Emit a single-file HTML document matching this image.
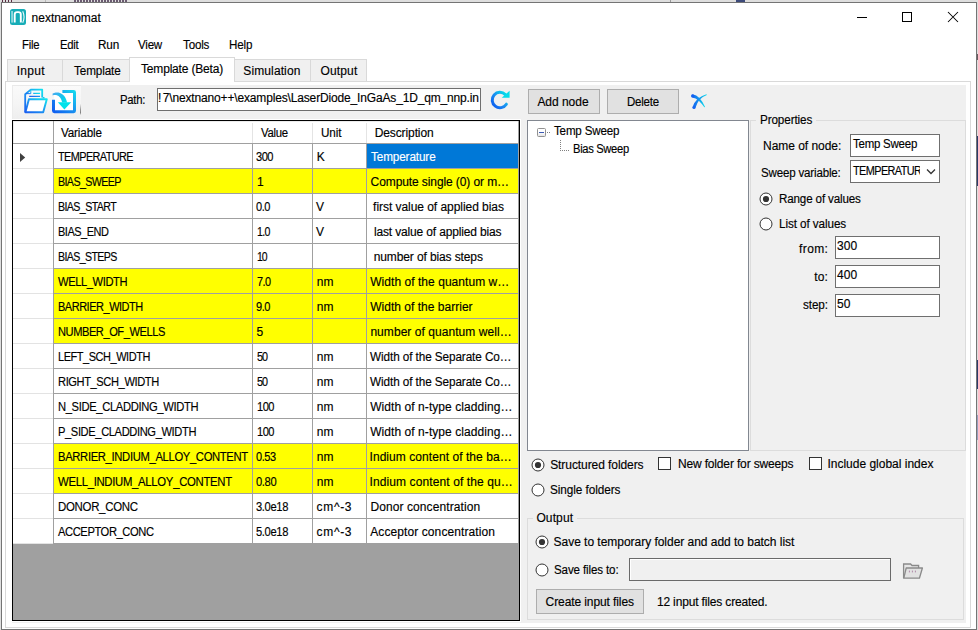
<!DOCTYPE html>
<html><head><meta charset="utf-8"><title>nextnanomat</title>
<style>
html,body{margin:0;padding:0;width:978px;height:630px;overflow:hidden;background:#dedede}
body>div,body>svg{position:absolute}
.t{position:absolute;transform-origin:0 0;-webkit-text-stroke-width:0.15px;font-family:"Liberation Sans", sans-serif;font-size:12px;line-height:15px;white-space:pre;color:#000}
</style></head><body>
<div style="left:0px;top:0px;width:978px;height:630px;background:#dedede"></div>
<div style="left:1px;top:2px;width:976px;height:628px;background:#fff;box-sizing:border-box;border:1px solid #747474"></div>
<div style="left:2px;top:0px;width:1px;height:2px;background:#5a2a40"></div>
<div style="left:5px;top:0px;width:1px;height:2px;background:#5a2a40"></div>
<div style="left:8px;top:0px;width:1px;height:2px;background:#5a2a40"></div>
<div style="left:11px;top:0px;width:1px;height:2px;background:#5a2a40"></div>
<div style="left:45px;top:0px;width:1px;height:2px;background:#b8b8b8"></div>
<div style="left:74px;top:0px;width:2px;height:2px;background:#6a5a70"></div>
<div style="left:77px;top:0px;width:2px;height:2px;background:#6a5a70"></div>
<div style="left:80px;top:0px;width:2px;height:2px;background:#6a5a70"></div>
<div style="left:83px;top:0px;width:2px;height:2px;background:#6a5a70"></div>
<div style="left:86px;top:0px;width:2px;height:2px;background:#6a5a70"></div>
<div style="left:89px;top:0px;width:2px;height:2px;background:#6a5a70"></div>
<div style="left:92px;top:0px;width:2px;height:2px;background:#6a5a70"></div>
<div style="left:95px;top:0px;width:2px;height:2px;background:#6a5a70"></div>
<div style="left:98px;top:0px;width:2px;height:2px;background:#6a5a70"></div>
<div style="left:101px;top:0px;width:2px;height:2px;background:#6a5a70"></div>
<div style="left:104px;top:0px;width:2px;height:2px;background:#6a5a70"></div>
<div style="left:107px;top:0px;width:2px;height:2px;background:#6a5a70"></div>
<div style="left:110px;top:0px;width:2px;height:2px;background:#6a5a70"></div>
<div style="left:113px;top:0px;width:2px;height:2px;background:#6a5a70"></div>
<div style="left:116px;top:0px;width:2px;height:2px;background:#6a5a70"></div>
<div style="left:119px;top:0px;width:2px;height:2px;background:#6a5a70"></div>
<div style="left:122px;top:0px;width:2px;height:2px;background:#6a5a70"></div>
<div style="left:125px;top:0px;width:2px;height:2px;background:#6a5a70"></div>
<div style="left:670px;top:0px;width:1px;height:2px;background:#9a9a9a"></div>
<div style="left:736px;top:0px;width:9px;height:2px;background:#3c4a7a"></div>
<div style="left:977px;top:136px;width:1px;height:50px;background:#2c3a6a"></div>
<div style="left:977px;top:360px;width:1px;height:29px;background:#2c3a6a"></div>
<div style="left:977px;top:415px;width:1px;height:25px;background:#9aa0c0"></div>
<div style="left:977px;top:54px;width:1px;height:6px;background:#6a5a60"></div>
<svg style="left:10px;top:9px" width="16" height="16" viewBox="0 0 16 16">
<rect x="0" y="0" width="16" height="16" rx="2.5" fill="#17adb7"/>
<rect x="1.3" y="2" width="1.5" height="11.6" fill="#aee3e7"/>
<path d="M4.7 13.4 V5.4 Q4.7 3.1 7.2 3.1 H8.4 Q10.8 3.1 10.8 5.4 V13.4" fill="none" stroke="#fff" stroke-width="1.9"/>
<path d="M12.7 2.2 Q15.4 8 12.7 13.8" fill="none" stroke="#f0fbfc" stroke-width="1.1"/>
</svg>
<div style="left:857px;top:17px;width:10px;height:1px;background:#000"></div>
<div style="left:902px;top:12px;width:10px;height:10px;box-sizing:border-box;border:1px solid #000"></div>
<svg style="left:947px;top:11px" width="12" height="12" viewBox="0 0 12 12">
<path d="M1 1 L11 11 M11 1 L1 11" stroke="#000" stroke-width="1.05"/></svg>
<div style="left:5px;top:81px;width:966px;height:547px;background:#fff;box-sizing:border-box;border:1px solid #d9d9d9"></div>
<div style="left:7px;top:59px;width:56px;height:23px;background:#f0f0f0;box-sizing:border-box;border:1px solid #d9d9d9"></div>
<div style="left:62px;top:59px;width:68px;height:23px;background:#f0f0f0;box-sizing:border-box;border:1px solid #d9d9d9"></div>
<div style="left:234px;top:59px;width:77px;height:23px;background:#f0f0f0;box-sizing:border-box;border:1px solid #d9d9d9"></div>
<div style="left:310px;top:59px;width:57px;height:23px;background:#f0f0f0;box-sizing:border-box;border:1px solid #d9d9d9"></div>
<div style="left:129px;top:57px;width:106px;height:25px;background:#fff;box-sizing:border-box;border:1px solid #d9d9d9;border-bottom:none"></div>
<div style="left:130px;top:81px;width:104px;height:4px;background:#fff"></div>
<div style="left:12px;top:85px;width:954px;height:538px;background:#f0f0f0"></div>
<div style="left:12px;top:85px;width:69px;height:34px;background:linear-gradient(#fafafa,#f4f4f4 60%,#eeeeee);box-sizing:border-box;border-top:1px solid #e9e9e9;border-left:1px solid #ececec"></div>
<div style="left:80px;top:104px;width:1px;height:11px;background:linear-gradient(#f0f0f0,#9a9a9a 50%,#808080 80%,#f0f0f0)"></div>
<svg style="left:22px;top:87px" width="28" height="28" viewBox="0 0 28 28">
<defs><linearGradient id="gf" x1="0" y1="1" x2="1" y2="0"><stop offset="0" stop-color="#1a5ff0"/><stop offset="0.55" stop-color="#1c9ef2"/><stop offset="1" stop-color="#10e6ee"/></linearGradient></defs>
<path d="M3.2 25.2 V7.2 L8.8 2.6 H20.2 V10.4 M21.6 11.6 V10" fill="none" stroke="url(#gf)" stroke-width="1.8" stroke-linejoin="round"/>
<path d="M8.8 2.6 V6.6 H4" fill="none" stroke="url(#gf)" stroke-width="1"/>
<path d="M11.2 6.4 H18 M7.2 9.4 H18" stroke="url(#gf)" stroke-width="1.2"/>
<path d="M6.9 12.2 H24.8 L21.2 25.3 H3.4 Z" fill="#fff" stroke="url(#gf)" stroke-width="1.9" stroke-linejoin="round"/>
</svg>
<svg style="left:50px;top:87px" width="28" height="28" viewBox="0 0 28 28">
<defs><linearGradient id="gi" x1="0" y1="1" x2="1" y2="0"><stop offset="0" stop-color="#0f5ff0"/><stop offset="0.5" stop-color="#1890f0"/><stop offset="1" stop-color="#14d8ee"/></linearGradient>
<linearGradient id="ga" x1="0" y1="0" x2="1" y2="1"><stop offset="0" stop-color="#4aa8f0"/><stop offset="0.6" stop-color="#10c8ec"/><stop offset="1" stop-color="#00e4ea"/></linearGradient></defs>
<rect x="4" y="5" width="20" height="19" fill="#fff"/>
<path d="M12.4 4.4 H23.6 Q24.5 4.4 24.5 5.3 V23.8 Q24.5 24.7 23.6 24.7 H4.4 Q3.5 24.7 3.5 23.8 V12.8" fill="none" stroke="url(#gi)" stroke-width="3"/>
<path d="M2.6 6.6 C6 4.4 14.8 4.2 17.1 15.6 L12.1 15.6 C11.2 9.8 7.2 7.1 2.6 8.4 Z" fill="url(#ga)"/>
<path d="M7.8 15.3 H21.2 L14.4 22.5 Z" fill="#00e2ea"/>
</svg>
<div style="left:157px;top:88px;width:324px;height:23px;box-sizing:border-box;border:1px solid #6f6f6f;background:#fff;overflow:hidden"></div>
<div style="left:158px;top:89px;width:322px;height:21px;overflow:hidden"></div>
<svg style="left:488px;top:88px" width="24" height="24" viewBox="0 0 24 24">
<defs><linearGradient id="gr" x1="0" y1="1" x2="1" y2="0"><stop offset="0" stop-color="#0b55f0"/><stop offset="0.5" stop-color="#1b8ff0"/><stop offset="1" stop-color="#00e6ea"/></linearGradient></defs>
<path d="M17.4 6.6 A7.7 7.7 0 1 0 18.4 16.2" fill="none" stroke="url(#gr)" stroke-width="3" stroke-linecap="round"/>
<path d="M13.7 9.8 H21.6 V2.7 Z" fill="#05dcea"/>
</svg>
<div style="left:528px;top:89px;width:72px;height:25px;background:#e1e1e1;box-sizing:border-box;border:1px solid #adadad"></div>
<div style="left:607px;top:89px;width:72px;height:25px;background:#e1e1e1;box-sizing:border-box;border:1px solid #adadad"></div>
<svg style="left:688px;top:91px" width="22" height="20" viewBox="0 0 22 20">
<defs><linearGradient id="gx" x1="0" y1="0" x2="1" y2="0"><stop offset="0" stop-color="#1460f0"/><stop offset="0.5" stop-color="#1298ee"/><stop offset="1" stop-color="#0ee0ec"/></linearGradient></defs>
<path d="M4.4 3.3 Q8.6 4 11.4 7.1 Q14.6 10.6 17.1 15.9 L16.3 16.3 Q13.4 12 10.6 9.4 Q7.8 7.1 4.2 6.5 Z" fill="url(#gx)"/>
<circle cx="4.6" cy="4.9" r="1.6" fill="#1460f0"/>
<path d="M18.9 4.1 Q13.6 6.2 11.3 9 Q8.9 12 7.6 16.6 L4.4 16.4 Q6 11.4 9.8 7.8 Q12.8 5 18.4 3.2 Z" fill="url(#gx)"/>
<circle cx="6" cy="16.5" r="1.6" fill="#1766f0"/>
</svg>
<div style="left:12px;top:119px;width:509px;height:1px;background:#fff"></div>
<div style="left:520px;top:119px;width:1px;height:503px;background:#fff"></div>
<div style="left:12px;top:621px;width:509px;height:1px;background:#fff"></div>
<div style="left:12px;top:120px;width:508px;height:501px;background:#a0a0a0;box-sizing:border-box;border:1px solid #000"></div>
<div style="left:13px;top:121px;width:505px;height:22px;background:#fff"></div>
<div style="left:13px;top:121px;width:505px;height:1px;background:#ececec"></div>
<div style="left:13px;top:121px;width:1px;height:22px;background:#ececec"></div>
<div style="left:13px;top:143px;width:505px;height:1px;background:#a0a0a0"></div>
<div style="left:53px;top:121px;width:1px;height:22px;background:#a0a0a0"></div>
<div style="left:252px;top:123px;width:1px;height:20px;background:#e4e4e4"></div>
<div style="left:312px;top:123px;width:1px;height:20px;background:#e4e4e4"></div>
<div style="left:366px;top:123px;width:1px;height:20px;background:#e4e4e4"></div>
<div style="left:13px;top:144px;width:40px;height:24px;background:#fff"></div>
<div style="left:13px;top:168px;width:40px;height:1px;background:#e3e3e3"></div>
<div style="left:54px;top:144px;width:464px;height:24px;background:#fff"></div>
<div style="left:367px;top:144px;width:151px;height:24px;background:#0078d7"></div>
<div style="left:53px;top:168px;width:466px;height:1px;background:#a0a0a0"></div>
<div style="left:53px;top:144px;width:1px;height:25px;background:#a0a0a0"></div>
<div style="left:252px;top:144px;width:1px;height:25px;background:#a0a0a0"></div>
<div style="left:312px;top:144px;width:1px;height:25px;background:#a0a0a0"></div>
<div style="left:366px;top:144px;width:1px;height:25px;background:#a0a0a0"></div>
<div style="left:518px;top:144px;width:1px;height:25px;background:#a0a0a0"></div>
<div style="left:13px;top:169px;width:40px;height:24px;background:#fff"></div>
<div style="left:13px;top:193px;width:40px;height:1px;background:#e3e3e3"></div>
<div style="left:54px;top:169px;width:464px;height:24px;background:#ffff00"></div>
<div style="left:53px;top:193px;width:466px;height:1px;background:#a0a0a0"></div>
<div style="left:53px;top:169px;width:1px;height:25px;background:#a0a0a0"></div>
<div style="left:252px;top:169px;width:1px;height:25px;background:#a0a0a0"></div>
<div style="left:312px;top:169px;width:1px;height:25px;background:#a0a0a0"></div>
<div style="left:366px;top:169px;width:1px;height:25px;background:#a0a0a0"></div>
<div style="left:518px;top:169px;width:1px;height:25px;background:#a0a0a0"></div>
<div style="left:13px;top:194px;width:40px;height:24px;background:#fff"></div>
<div style="left:13px;top:218px;width:40px;height:1px;background:#e3e3e3"></div>
<div style="left:54px;top:194px;width:464px;height:24px;background:#fff"></div>
<div style="left:53px;top:218px;width:466px;height:1px;background:#a0a0a0"></div>
<div style="left:53px;top:194px;width:1px;height:25px;background:#a0a0a0"></div>
<div style="left:252px;top:194px;width:1px;height:25px;background:#a0a0a0"></div>
<div style="left:312px;top:194px;width:1px;height:25px;background:#a0a0a0"></div>
<div style="left:366px;top:194px;width:1px;height:25px;background:#a0a0a0"></div>
<div style="left:518px;top:194px;width:1px;height:25px;background:#a0a0a0"></div>
<div style="left:13px;top:219px;width:40px;height:24px;background:#fff"></div>
<div style="left:13px;top:243px;width:40px;height:1px;background:#e3e3e3"></div>
<div style="left:54px;top:219px;width:464px;height:24px;background:#fff"></div>
<div style="left:53px;top:243px;width:466px;height:1px;background:#a0a0a0"></div>
<div style="left:53px;top:219px;width:1px;height:25px;background:#a0a0a0"></div>
<div style="left:252px;top:219px;width:1px;height:25px;background:#a0a0a0"></div>
<div style="left:312px;top:219px;width:1px;height:25px;background:#a0a0a0"></div>
<div style="left:366px;top:219px;width:1px;height:25px;background:#a0a0a0"></div>
<div style="left:518px;top:219px;width:1px;height:25px;background:#a0a0a0"></div>
<div style="left:13px;top:244px;width:40px;height:24px;background:#fff"></div>
<div style="left:13px;top:268px;width:40px;height:1px;background:#e3e3e3"></div>
<div style="left:54px;top:244px;width:464px;height:24px;background:#fff"></div>
<div style="left:53px;top:268px;width:466px;height:1px;background:#a0a0a0"></div>
<div style="left:53px;top:244px;width:1px;height:25px;background:#a0a0a0"></div>
<div style="left:252px;top:244px;width:1px;height:25px;background:#a0a0a0"></div>
<div style="left:312px;top:244px;width:1px;height:25px;background:#a0a0a0"></div>
<div style="left:366px;top:244px;width:1px;height:25px;background:#a0a0a0"></div>
<div style="left:518px;top:244px;width:1px;height:25px;background:#a0a0a0"></div>
<div style="left:13px;top:269px;width:40px;height:24px;background:#fff"></div>
<div style="left:13px;top:293px;width:40px;height:1px;background:#e3e3e3"></div>
<div style="left:54px;top:269px;width:464px;height:24px;background:#ffff00"></div>
<div style="left:53px;top:293px;width:466px;height:1px;background:#a0a0a0"></div>
<div style="left:53px;top:269px;width:1px;height:25px;background:#a0a0a0"></div>
<div style="left:252px;top:269px;width:1px;height:25px;background:#a0a0a0"></div>
<div style="left:312px;top:269px;width:1px;height:25px;background:#a0a0a0"></div>
<div style="left:366px;top:269px;width:1px;height:25px;background:#a0a0a0"></div>
<div style="left:518px;top:269px;width:1px;height:25px;background:#a0a0a0"></div>
<div style="left:13px;top:294px;width:40px;height:24px;background:#fff"></div>
<div style="left:13px;top:318px;width:40px;height:1px;background:#e3e3e3"></div>
<div style="left:54px;top:294px;width:464px;height:24px;background:#ffff00"></div>
<div style="left:53px;top:318px;width:466px;height:1px;background:#a0a0a0"></div>
<div style="left:53px;top:294px;width:1px;height:25px;background:#a0a0a0"></div>
<div style="left:252px;top:294px;width:1px;height:25px;background:#a0a0a0"></div>
<div style="left:312px;top:294px;width:1px;height:25px;background:#a0a0a0"></div>
<div style="left:366px;top:294px;width:1px;height:25px;background:#a0a0a0"></div>
<div style="left:518px;top:294px;width:1px;height:25px;background:#a0a0a0"></div>
<div style="left:13px;top:319px;width:40px;height:24px;background:#fff"></div>
<div style="left:13px;top:343px;width:40px;height:1px;background:#e3e3e3"></div>
<div style="left:54px;top:319px;width:464px;height:24px;background:#ffff00"></div>
<div style="left:53px;top:343px;width:466px;height:1px;background:#a0a0a0"></div>
<div style="left:53px;top:319px;width:1px;height:25px;background:#a0a0a0"></div>
<div style="left:252px;top:319px;width:1px;height:25px;background:#a0a0a0"></div>
<div style="left:312px;top:319px;width:1px;height:25px;background:#a0a0a0"></div>
<div style="left:366px;top:319px;width:1px;height:25px;background:#a0a0a0"></div>
<div style="left:518px;top:319px;width:1px;height:25px;background:#a0a0a0"></div>
<div style="left:13px;top:344px;width:40px;height:24px;background:#fff"></div>
<div style="left:13px;top:368px;width:40px;height:1px;background:#e3e3e3"></div>
<div style="left:54px;top:344px;width:464px;height:24px;background:#fff"></div>
<div style="left:53px;top:368px;width:466px;height:1px;background:#a0a0a0"></div>
<div style="left:53px;top:344px;width:1px;height:25px;background:#a0a0a0"></div>
<div style="left:252px;top:344px;width:1px;height:25px;background:#a0a0a0"></div>
<div style="left:312px;top:344px;width:1px;height:25px;background:#a0a0a0"></div>
<div style="left:366px;top:344px;width:1px;height:25px;background:#a0a0a0"></div>
<div style="left:518px;top:344px;width:1px;height:25px;background:#a0a0a0"></div>
<div style="left:13px;top:369px;width:40px;height:24px;background:#fff"></div>
<div style="left:13px;top:393px;width:40px;height:1px;background:#e3e3e3"></div>
<div style="left:54px;top:369px;width:464px;height:24px;background:#fff"></div>
<div style="left:53px;top:393px;width:466px;height:1px;background:#a0a0a0"></div>
<div style="left:53px;top:369px;width:1px;height:25px;background:#a0a0a0"></div>
<div style="left:252px;top:369px;width:1px;height:25px;background:#a0a0a0"></div>
<div style="left:312px;top:369px;width:1px;height:25px;background:#a0a0a0"></div>
<div style="left:366px;top:369px;width:1px;height:25px;background:#a0a0a0"></div>
<div style="left:518px;top:369px;width:1px;height:25px;background:#a0a0a0"></div>
<div style="left:13px;top:394px;width:40px;height:24px;background:#fff"></div>
<div style="left:13px;top:418px;width:40px;height:1px;background:#e3e3e3"></div>
<div style="left:54px;top:394px;width:464px;height:24px;background:#fff"></div>
<div style="left:53px;top:418px;width:466px;height:1px;background:#a0a0a0"></div>
<div style="left:53px;top:394px;width:1px;height:25px;background:#a0a0a0"></div>
<div style="left:252px;top:394px;width:1px;height:25px;background:#a0a0a0"></div>
<div style="left:312px;top:394px;width:1px;height:25px;background:#a0a0a0"></div>
<div style="left:366px;top:394px;width:1px;height:25px;background:#a0a0a0"></div>
<div style="left:518px;top:394px;width:1px;height:25px;background:#a0a0a0"></div>
<div style="left:13px;top:419px;width:40px;height:24px;background:#fff"></div>
<div style="left:13px;top:443px;width:40px;height:1px;background:#e3e3e3"></div>
<div style="left:54px;top:419px;width:464px;height:24px;background:#fff"></div>
<div style="left:53px;top:443px;width:466px;height:1px;background:#a0a0a0"></div>
<div style="left:53px;top:419px;width:1px;height:25px;background:#a0a0a0"></div>
<div style="left:252px;top:419px;width:1px;height:25px;background:#a0a0a0"></div>
<div style="left:312px;top:419px;width:1px;height:25px;background:#a0a0a0"></div>
<div style="left:366px;top:419px;width:1px;height:25px;background:#a0a0a0"></div>
<div style="left:518px;top:419px;width:1px;height:25px;background:#a0a0a0"></div>
<div style="left:13px;top:444px;width:40px;height:24px;background:#fff"></div>
<div style="left:13px;top:468px;width:40px;height:1px;background:#e3e3e3"></div>
<div style="left:54px;top:444px;width:464px;height:24px;background:#ffff00"></div>
<div style="left:53px;top:468px;width:466px;height:1px;background:#a0a0a0"></div>
<div style="left:53px;top:444px;width:1px;height:25px;background:#a0a0a0"></div>
<div style="left:252px;top:444px;width:1px;height:25px;background:#a0a0a0"></div>
<div style="left:312px;top:444px;width:1px;height:25px;background:#a0a0a0"></div>
<div style="left:366px;top:444px;width:1px;height:25px;background:#a0a0a0"></div>
<div style="left:518px;top:444px;width:1px;height:25px;background:#a0a0a0"></div>
<div style="left:13px;top:469px;width:40px;height:24px;background:#fff"></div>
<div style="left:13px;top:493px;width:40px;height:1px;background:#e3e3e3"></div>
<div style="left:54px;top:469px;width:464px;height:24px;background:#ffff00"></div>
<div style="left:53px;top:493px;width:466px;height:1px;background:#a0a0a0"></div>
<div style="left:53px;top:469px;width:1px;height:25px;background:#a0a0a0"></div>
<div style="left:252px;top:469px;width:1px;height:25px;background:#a0a0a0"></div>
<div style="left:312px;top:469px;width:1px;height:25px;background:#a0a0a0"></div>
<div style="left:366px;top:469px;width:1px;height:25px;background:#a0a0a0"></div>
<div style="left:518px;top:469px;width:1px;height:25px;background:#a0a0a0"></div>
<div style="left:13px;top:494px;width:40px;height:24px;background:#fff"></div>
<div style="left:13px;top:518px;width:40px;height:1px;background:#e3e3e3"></div>
<div style="left:54px;top:494px;width:464px;height:24px;background:#fff"></div>
<div style="left:53px;top:518px;width:466px;height:1px;background:#a0a0a0"></div>
<div style="left:53px;top:494px;width:1px;height:25px;background:#a0a0a0"></div>
<div style="left:252px;top:494px;width:1px;height:25px;background:#a0a0a0"></div>
<div style="left:312px;top:494px;width:1px;height:25px;background:#a0a0a0"></div>
<div style="left:366px;top:494px;width:1px;height:25px;background:#a0a0a0"></div>
<div style="left:518px;top:494px;width:1px;height:25px;background:#a0a0a0"></div>
<div style="left:13px;top:519px;width:40px;height:24px;background:#fff"></div>
<div style="left:13px;top:543px;width:40px;height:1px;background:#e3e3e3"></div>
<div style="left:54px;top:519px;width:464px;height:24px;background:#fff"></div>
<div style="left:53px;top:543px;width:466px;height:1px;background:#a0a0a0"></div>
<div style="left:53px;top:519px;width:1px;height:25px;background:#a0a0a0"></div>
<div style="left:252px;top:519px;width:1px;height:25px;background:#a0a0a0"></div>
<div style="left:312px;top:519px;width:1px;height:25px;background:#a0a0a0"></div>
<div style="left:366px;top:519px;width:1px;height:25px;background:#a0a0a0"></div>
<div style="left:518px;top:519px;width:1px;height:25px;background:#a0a0a0"></div>
<svg style="left:19px;top:152px" width="8" height="11" viewBox="0 0 8 11"><path d="M1 1 L6.2 5.5 L1 10 Z" fill="#404040"/></svg>
<div style="left:527px;top:120px;width:222px;height:331px;background:#fff;box-sizing:border-box;border:1px solid #828790"></div>
<div style="left:537px;top:128px;width:9px;height:9px;box-sizing:border-box;border:1px solid #919191;border-radius:1.5px;background:linear-gradient(#fff 45%,#e4e4e4)"></div>
<div style="left:539px;top:132px;width:5px;height:1px;background:#3c5ab4"></div>
<div style="left:547px;top:132px;width:1px;height:1px;background:#808080"></div>
<div style="left:549px;top:132px;width:1px;height:1px;background:#808080"></div>
<div style="left:560px;top:140px;width:1px;height:1px;background:#808080"></div>
<div style="left:560px;top:142px;width:1px;height:1px;background:#808080"></div>
<div style="left:560px;top:144px;width:1px;height:1px;background:#808080"></div>
<div style="left:560px;top:146px;width:1px;height:1px;background:#808080"></div>
<div style="left:560px;top:148px;width:1px;height:1px;background:#808080"></div>
<div style="left:560px;top:150px;width:1px;height:1px;background:#808080"></div>
<div style="left:562px;top:150px;width:1px;height:1px;background:#808080"></div>
<div style="left:564px;top:150px;width:1px;height:1px;background:#808080"></div>
<div style="left:566px;top:150px;width:1px;height:1px;background:#808080"></div>
<div style="left:568px;top:150px;width:1px;height:1px;background:#808080"></div>
<div style="left:750px;top:120px;width:216px;height:331px;box-sizing:border-box;border:1px solid #dcdcdc"></div>
<div style="left:756px;top:114px;width:60px;height:10px;background:#f0f0f0"></div>
<div style="left:850px;top:134px;width:90px;height:23px;background:#fff;box-sizing:border-box;border:1px solid #6f6f6f"></div>
<div style="left:850px;top:160px;width:90px;height:23px;background:#fff;box-sizing:border-box;border:1px solid #6f6f6f"></div>
<svg style="left:758.5px;top:191.5px" width="14" height="14" viewBox="0 0 14 14"><circle cx="7" cy="7" r="6" fill="#fff" stroke="#333" stroke-width="1"/><circle cx="7" cy="7" r="3.1" fill="#333"/></svg>
<svg style="left:758.5px;top:216.5px" width="14" height="14" viewBox="0 0 14 14"><circle cx="7" cy="7" r="6" fill="#fff" stroke="#333" stroke-width="1"/></svg>
<div style="left:835px;top:236px;width:105px;height:23px;background:#fff;box-sizing:border-box;border:1px solid #6f6f6f"></div>
<div style="left:835px;top:265px;width:105px;height:23px;background:#fff;box-sizing:border-box;border:1px solid #6f6f6f"></div>
<div style="left:835px;top:294px;width:105px;height:23px;background:#fff;box-sizing:border-box;border:1px solid #6f6f6f"></div>
<svg style="left:530.5px;top:457.5px" width="14" height="14" viewBox="0 0 14 14"><circle cx="7" cy="7" r="6" fill="#fff" stroke="#333" stroke-width="1"/><circle cx="7" cy="7" r="3.1" fill="#333"/></svg>
<div style="left:658px;top:457px;width:13px;height:13px;background:#fff;box-sizing:border-box;border:1px solid #333"></div>
<div style="left:809px;top:457px;width:13px;height:13px;background:#fff;box-sizing:border-box;border:1px solid #333"></div>
<svg style="left:530.5px;top:482.5px" width="14" height="14" viewBox="0 0 14 14"><circle cx="7" cy="7" r="6" fill="#fff" stroke="#333" stroke-width="1"/></svg>
<div style="left:527px;top:518px;width:437px;height:102px;box-sizing:border-box;border:1px solid #dcdcdc"></div>
<div style="left:533px;top:512px;width:44px;height:10px;background:#f0f0f0"></div>
<svg style="left:534.5px;top:534.5px" width="14" height="14" viewBox="0 0 14 14"><circle cx="7" cy="7" r="6" fill="#fff" stroke="#333" stroke-width="1"/><circle cx="7" cy="7" r="3.1" fill="#333"/></svg>
<svg style="left:534.5px;top:562.5px" width="14" height="14" viewBox="0 0 14 14"><circle cx="7" cy="7" r="6" fill="#fff" stroke="#333" stroke-width="1"/></svg>
<div style="left:629px;top:558px;width:262px;height:23px;background:#f0f0f0;box-sizing:border-box;border:1px solid #6a6a6a;box-shadow:inset 1px 1px 0 #fff"></div>
<svg style="left:902px;top:562px" width="22" height="18" viewBox="0 0 22 18">
<path d="M1.6 16.2 V2 H8.6 L10 3.5 H16.6 V6" fill="#e6e6e6" stroke="#8a8a8a" stroke-width="1.3"/>
<path d="M4.2 6 H20.4 L17.4 16.2 H1.8 Z" fill="#e2e2e2" stroke="#8a8a8a" stroke-width="1.3" stroke-linejoin="round"/>
<path d="M7.4 8.6 V10.4 M10.4 8.6 V10.4 M13.4 8.6 V10.4" stroke="#b08aa8" stroke-width="1"/>
</svg>
<div style="left:536px;top:589px;width:108px;height:25px;background:#e1e1e1;box-sizing:border-box;border:1px solid #adadad"></div>
<div class="t" style="left:31.60px;top:11px;letter-spacing:-0.015px;">nextnanomat</div>
<div class="t" style="left:22.20px;top:38px;letter-spacing:-0.263px;transform:scaleX(0.9432);">File</div>
<div class="t" style="left:59.80px;top:38px;letter-spacing:-0.304px;transform:scaleX(0.9397);">Edit</div>
<div class="t" style="left:98.00px;top:38px;letter-spacing:-0.151px;transform:scaleX(0.9792);">Run</div>
<div class="t" style="left:138.30px;top:38px;letter-spacing:-0.225px;transform:scaleX(0.9626);">View</div>
<div class="t" style="left:182.50px;top:38px;letter-spacing:-0.167px;transform:scaleX(0.9654);">Tools</div>
<div class="t" style="left:228.60px;top:38px;letter-spacing:-0.180px;transform:scaleX(0.9687);">Help</div>
<div class="t" style="left:16.70px;top:64px;letter-spacing:0.311px;">Input</div>
<div class="t" style="left:73.60px;top:64px;letter-spacing:-0.118px;transform:scaleX(0.9753);">Template</div>
<div class="t" style="left:141.00px;top:62px;letter-spacing:-0.179px;">Template (Beta)</div>
<div class="t" style="left:243.30px;top:64px;letter-spacing:0.116px;">Simulation</div>
<div class="t" style="left:320.60px;top:64px;letter-spacing:0.122px;">Output</div>
<div class="t" style="left:119.90px;top:93px;letter-spacing:-0.274px;transform:scaleX(0.9440);">Path:</div>
<div class="t" style="left:157.90px;top:91px;">!</div>
<div class="t" style="left:162.80px;top:91px;letter-spacing:-0.158px;">7\nextnano++\examples\LaserDiode_InGaAs_1D_qm_nnp.in</div>
<div class="t" style="left:537.40px;top:95px;letter-spacing:-0.030px;">Add node</div>
<div class="t" style="left:626.60px;top:95px;letter-spacing:-0.219px;transform:scaleX(0.9552);">Delete</div>
<div class="t" style="left:60.90px;top:126px;letter-spacing:-0.133px;transform:scaleX(0.9688);">Variable</div>
<div class="t" style="left:260.50px;top:126px;letter-spacing:-0.277px;transform:scaleX(0.9477);">Value</div>
<div class="t" style="left:320.70px;top:126px;letter-spacing:-0.124px;transform:scaleX(0.9753);">Unit</div>
<div class="t" style="left:374.70px;top:126px;letter-spacing:-0.105px;">Description</div>
<div class="t" style="left:57.70px;top:150px;letter-spacing:-0.627px;transform:scaleX(0.9052);">TEMPERATURE</div>
<div class="t" style="left:256.20px;top:150px;letter-spacing:-0.551px;transform:scaleX(0.9249);">300</div>
<div class="t" style="left:316.70px;top:150px;">K</div>
<div class="t" style="left:371.10px;top:150px;letter-spacing:-0.110px;transform:scaleX(0.9761);color:#fff">Temperature</div>
<div class="t" style="left:57.70px;top:175px;letter-spacing:-0.696px;transform:scaleX(0.8917);">BIAS_SWEEP</div>
<div class="t" style="left:257.10px;top:175px;">1</div>
<div class="t" style="left:370.60px;top:175px;letter-spacing:-0.096px;">Compute single (0) or m…</div>
<div class="t" style="left:57.70px;top:200px;letter-spacing:-0.682px;transform:scaleX(0.8880);">BIAS_START</div>
<div class="t" style="left:256.20px;top:200px;letter-spacing:-0.502px;transform:scaleX(0.9186);">0.0</div>
<div class="t" style="left:316.00px;top:200px;">V</div>
<div class="t" style="left:373.10px;top:200px;letter-spacing:-0.045px;">first value of applied bias</div>
<div class="t" style="left:57.70px;top:225px;letter-spacing:-0.537px;transform:scaleX(0.9137);">BIAS_END</div>
<div class="t" style="left:257.10px;top:225px;letter-spacing:-0.723px;transform:scaleX(0.8868);">1.0</div>
<div class="t" style="left:316.00px;top:225px;">V</div>
<div class="t" style="left:373.90px;top:225px;letter-spacing:-0.149px;">last value of applied bias</div>
<div class="t" style="left:57.70px;top:250px;letter-spacing:-0.706px;transform:scaleX(0.8850);">BIAS_STEPS</div>
<div class="t" style="left:257.10px;top:250px;letter-spacing:-1.315px;transform:scaleX(0.8739);">10</div>
<div class="t" style="left:373.70px;top:250px;letter-spacing:-0.115px;">number of bias steps</div>
<div class="t" style="left:57.70px;top:275px;letter-spacing:-0.435px;transform:scaleX(0.9299);">WELL_WIDTH</div>
<div class="t" style="left:256.50px;top:275px;letter-spacing:-0.574px;transform:scaleX(0.9080);">7.0</div>
<div class="t" style="left:316.70px;top:275px;letter-spacing:0.126px;">nm</div>
<div class="t" style="left:370.20px;top:275px;letter-spacing:0.047px;">Width of the quantum w…</div>
<div class="t" style="left:57.70px;top:300px;letter-spacing:-0.513px;transform:scaleX(0.9144);">BARRIER_WIDTH</div>
<div class="t" style="left:256.20px;top:300px;letter-spacing:-0.502px;transform:scaleX(0.9186);">9.0</div>
<div class="t" style="left:316.70px;top:300px;letter-spacing:0.126px;">nm</div>
<div class="t" style="left:370.20px;top:300px;letter-spacing:0.019px;">Width of the barrier</div>
<div class="t" style="left:57.70px;top:325px;letter-spacing:-0.476px;transform:scaleX(0.9247);">NUMBER_OF_WELLS</div>
<div class="t" style="left:256.50px;top:325px;">5</div>
<div class="t" style="left:370.40px;top:325px;letter-spacing:0.056px;">number of quantum well…</div>
<div class="t" style="left:57.70px;top:350px;letter-spacing:-0.500px;transform:scaleX(0.9163);">LEFT_SCH_WIDTH</div>
<div class="t" style="left:256.50px;top:350px;letter-spacing:-1.010px;transform:scaleX(0.9002);">50</div>
<div class="t" style="left:316.70px;top:350px;letter-spacing:0.126px;">nm</div>
<div class="t" style="left:370.20px;top:350px;letter-spacing:-0.089px;transform:scaleX(0.9784);">Width of the Separate Co…</div>
<div class="t" style="left:57.70px;top:375px;letter-spacing:-0.434px;transform:scaleX(0.9264);">RIGHT_SCH_WIDTH</div>
<div class="t" style="left:256.50px;top:375px;letter-spacing:-1.010px;transform:scaleX(0.9002);">50</div>
<div class="t" style="left:316.70px;top:375px;letter-spacing:0.126px;">nm</div>
<div class="t" style="left:370.20px;top:375px;letter-spacing:-0.089px;transform:scaleX(0.9784);">Width of the Separate Co…</div>
<div class="t" style="left:57.70px;top:400px;letter-spacing:-0.374px;transform:scaleX(0.9334);">N_SIDE_CLADDING_WIDTH</div>
<div class="t" style="left:257.10px;top:400px;letter-spacing:-0.551px;transform:scaleX(0.9249);">100</div>
<div class="t" style="left:316.70px;top:400px;letter-spacing:0.126px;">nm</div>
<div class="t" style="left:370.20px;top:400px;letter-spacing:0.061px;">Width of n-type cladding…</div>
<div class="t" style="left:57.70px;top:425px;letter-spacing:-0.407px;transform:scaleX(0.9276);">P_SIDE_CLADDING_WIDTH</div>
<div class="t" style="left:257.10px;top:425px;letter-spacing:-0.551px;transform:scaleX(0.9249);">100</div>
<div class="t" style="left:316.70px;top:425px;letter-spacing:0.126px;">nm</div>
<div class="t" style="left:370.20px;top:425px;letter-spacing:0.061px;">Width of n-type cladding…</div>
<div class="t" style="left:57.70px;top:450px;letter-spacing:-0.357px;transform:scaleX(0.9365);">BARRIER_INDIUM_ALLOY_CONTENT</div>
<div class="t" style="left:256.20px;top:450px;letter-spacing:-0.493px;transform:scaleX(0.9143);">0.53</div>
<div class="t" style="left:316.70px;top:450px;letter-spacing:0.126px;">nm</div>
<div class="t" style="left:369.50px;top:450px;letter-spacing:0.060px;">Indium content of the ba…</div>
<div class="t" style="left:57.70px;top:475px;letter-spacing:-0.318px;transform:scaleX(0.9439);">WELL_INDIUM_ALLOY_CONTENT</div>
<div class="t" style="left:256.20px;top:475px;letter-spacing:-0.399px;transform:scaleX(0.9295);">0.80</div>
<div class="t" style="left:316.70px;top:475px;letter-spacing:0.126px;">nm</div>
<div class="t" style="left:369.50px;top:475px;letter-spacing:0.106px;">Indium content of the qu…</div>
<div class="t" style="left:57.70px;top:500px;letter-spacing:-0.312px;transform:scaleX(0.9538);">DONOR_CONC</div>
<div class="t" style="left:256.10px;top:500px;letter-spacing:-0.372px;transform:scaleX(0.9299);">3.0e18</div>
<div class="t" style="left:316.60px;top:500px;letter-spacing:0.644px;">cm^-3</div>
<div class="t" style="left:370.50px;top:500px;letter-spacing:0.084px;">Donor concentration</div>
<div class="t" style="left:57.70px;top:525px;letter-spacing:-0.447px;transform:scaleX(0.9311);">ACCEPTOR_CONC</div>
<div class="t" style="left:256.10px;top:525px;letter-spacing:-0.372px;transform:scaleX(0.9299);">5.0e18</div>
<div class="t" style="left:316.60px;top:525px;letter-spacing:0.644px;">cm^-3</div>
<div class="t" style="left:370.20px;top:525px;letter-spacing:0.097px;">Acceptor concentration</div>
<div class="t" style="left:553.80px;top:124px;letter-spacing:-0.184px;transform:scaleX(0.9656);">Temp Sweep</div>
<div class="t" style="left:572.90px;top:142px;letter-spacing:-0.348px;transform:scaleX(0.9313);">Bias Sweep</div>
<div class="t" style="left:759.50px;top:113px;letter-spacing:-0.109px;transform:scaleX(0.9738);">Properties</div>
<div class="t" style="left:763.00px;top:139px;letter-spacing:-0.032px;">Name of node:</div>
<div class="t" style="left:853.00px;top:137px;letter-spacing:-0.237px;transform:scaleX(0.9561);">Temp Sweep</div>
<div class="t" style="left:761.40px;top:166px;letter-spacing:-0.165px;transform:scaleX(0.9609);">Sweep variable:</div>
<div class="t" style="left:853.00px;top:164px;letter-spacing:-0.627px;transform:scaleX(0.9052);">TEMPERATURE</div>
<div class="t" style="left:778.50px;top:192px;letter-spacing:-0.143px;transform:scaleX(0.9666);">Range of values</div>
<div class="t" style="left:778.50px;top:217px;letter-spacing:-0.089px;transform:scaleX(0.9757);">List of values</div>
<div class="t" style="left:799.00px;top:242px;letter-spacing:0.400px;">from:</div>
<div class="t" style="left:814.20px;top:270px;letter-spacing:0.196px;">to:</div>
<div class="t" style="left:803.00px;top:298px;letter-spacing:-0.111px;transform:scaleX(0.9747);">step:</div>
<div class="t" style="left:837.10px;top:239px;">300</div>
<div class="t" style="left:837.10px;top:268px;">400</div>
<div class="t" style="left:837.10px;top:297px;">50</div>
<div class="t" style="left:550.20px;top:458px;letter-spacing:-0.077px;">Structured folders</div>
<div class="t" style="left:677.90px;top:457px;letter-spacing:-0.151px;">New folder for sweeps</div>
<div class="t" style="left:827.40px;top:457px;">Include global index</div>
<div class="t" style="left:550.20px;top:483px;letter-spacing:-0.072px;transform:scaleX(0.9809);">Single folders</div>
<div class="t" style="left:536.40px;top:511px;letter-spacing:0.122px;">Output</div>
<div class="t" style="left:553.60px;top:535px;letter-spacing:-0.031px;">Save to temporary folder and add to batch list</div>
<div class="t" style="left:554.20px;top:563px;letter-spacing:-0.130px;transform:scaleX(0.9643);">Save files to:</div>
<div class="t" style="left:545.60px;top:595px;letter-spacing:-0.097px;">Create input files</div>
<div class="t" style="left:656.90px;top:595px;letter-spacing:-0.152px;">12 input files created.</div>
<div style="left:920px;top:161px;width:19px;height:21px;background:#fff"></div>
<svg style="left:926px;top:168px" width="10" height="7" viewBox="0 0 10 7"><path d="M1 1.5 L5 5.5 L9 1.5" fill="none" stroke="#333" stroke-width="1.25"/></svg>
</body></html>
